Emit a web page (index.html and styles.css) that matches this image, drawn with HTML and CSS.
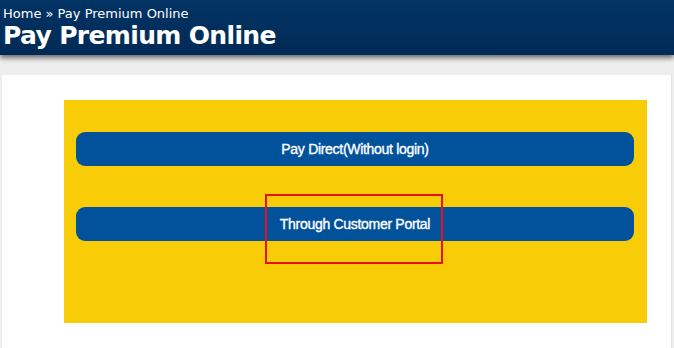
FILE: index.html
```html
<!DOCTYPE html>
<html>
<head>
<meta charset="utf-8">
<link rel="stylesheet" href="styles.css">
</head>
<body>
<header class="top">
  <div class="crumbs">Home &raquo; Pay Premium Online</div>
  <h1 class="title">Pay Premium Online</h1>
</header>
<main class="main">
  <div class="panel">
    <div class="box">
      <button class="btn">Pay Direct(Without login)</button>
      <button class="btn">Through Customer Portal</button>
      <div class="highlight"></div>
    </div>
  </div>
</main>
</body>
</html>
```
FILE: styles.css
```css
html, body {
  margin: 0;
  padding: 0;
}
body {
  background: #eeeeee;
  width: 674px;
  height: 348px;
  overflow: hidden;
  font-family: "DejaVu Sans", Verdana, sans-serif;
}
.top {
  height: 55px;
  box-sizing: border-box;
  padding: 6px 3px 0;
  background: linear-gradient(#023465, #012a55);
  color: #ffffff;
  box-shadow: 0 3px 5px rgba(0, 0, 0, 0.55);
  position: relative;
  z-index: 1;
}
.crumbs {
  font-size: 13px;
  line-height: 15px;
}
.title {
  margin: 0;
  font-size: 25px;
  line-height: 30px;
  font-weight: bold;
  letter-spacing: -0.65px;
}
.main {
  padding: 20px 2px 0 2px;
}
.panel {
  background: #ffffff;
  height: 280px;
  box-sizing: border-box;
  padding: 25px 0 0 62px;
  border-right: 1px solid #e4e4e4;
}
.box {
  position: relative;
  width: 583px;
  height: 223px;
  box-sizing: border-box;
  background: #f8cd07;
  padding: 32px 13px 0 12px;
  display: flex;
  flex-direction: column;
  gap: 41px;
}
.btn {
  display: block;
  width: 100%;
  height: 34px;
  border: 0;
  border-radius: 9px;
  background: #01529b;
  color: #ffffff;
  font-family: "Liberation Sans", Arial, sans-serif;
  font-size: 14px;
  font-weight: normal;
  letter-spacing: -0.3px;
  -webkit-text-stroke: 0.35px #ffffff;
  padding: 0;
  margin: 0;
  cursor: pointer;
}
.highlight {
  position: absolute;
  left: 201px;
  top: 94px;
  width: 178px;
  height: 70px;
  box-sizing: border-box;
  border: 2px solid #e8101a;
}
```
